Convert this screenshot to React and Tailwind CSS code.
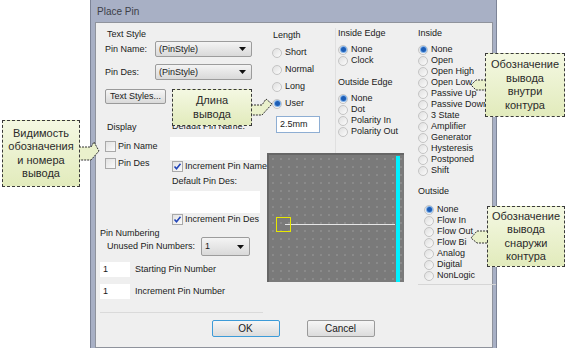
import clsx from "clsx";

const UI = "font-['Liberation_Sans',Arial,sans-serif]";

function Radio({ checked, label, className }) {
  return (
    <div className={clsx("flex items-center", className)}>
      <span className="flex h-[10px] w-[10px] shrink-0 items-center justify-center rounded-full border border-[#c4c4c4] bg-gradient-to-br from-[#e0e0e0] to-[#fbfbfb]">
        {checked && <span className="h-[5px] w-[5px] rounded-full bg-[#1c5db6] ring-1 ring-[#7fb0e8]" />}
      </span>
      <span className="ml-[3px] whitespace-nowrap">{label}</span>
    </div>
  );
}

function Check({ checked, label, className }) {
  return (
    <div className={clsx("flex items-center", className)}>
      <span className="flex h-[11px] w-[11px] shrink-0 items-center justify-center border border-[#a9a9a9] bg-gradient-to-br from-[#e2e2e2] to-[#fafafa]">
        {checked && (
          <svg width="9" height="9" viewBox="0 0 9 9">
            <path d="M1.5 4.5 L3.5 6.8 L7.5 1.8" fill="none" stroke="#2144b8" strokeWidth="1.6" />
          </svg>
        )}
      </span>
      <span className="ml-[2px] whitespace-nowrap">{label}</span>
    </div>
  );
}

function Select({ value, className }) {
  return (
    <div className={clsx("flex items-center justify-between rounded-[2px] border border-[#9c9c9c] bg-gradient-to-b from-[#f4f4f4] to-[#d9d9d9] pl-[3px] pr-[5px]", className)}>
      <span>{value}</span>
      <svg width="7" height="4" viewBox="0 0 7 4">
        <path d="M0 0 H7 L3.5 4 Z" fill="#111" />
      </svg>
    </div>
  );
}

function Field({ value, className }) {
  return (
    <div className={clsx("flex items-center bg-white pl-[3px]", className)}>{value}</div>
  );
}

function Callout({ lines, className }) {
  return (
    <div
      className={clsx(
        "absolute flex flex-col items-center justify-center border border-dashed border-[#3a3a3a] bg-gradient-to-b from-[#f4f8e2] to-[#e2ebbc] font-['Liberation_Sans',Arial,sans-serif] text-[11px] leading-[13.5px] text-[#2a2a2a]",
        className
      )}
    >
      {lines.map((l) => (
        <span key={l}>{l}</span>
      ))}
    </div>
  );
}

function Arrow({ points, className }) {
  return (
    <svg className={clsx("absolute left-0 top-0", className)} width="568" height="348" viewBox="0 0 568 348">
      <polygon points={points} fill="#eaf1cc" stroke="none" />
      <polyline points={points} fill="none" stroke="#333" strokeWidth="1" strokeDasharray="2 1" />
    </svg>
  );
}

function Preview() {
  return (
    <div className="relative h-[129px] w-[137px] border-l-2 border-t-2 border-[#666] bg-[#7a7a7a] bg-[radial-gradient(circle,#9c9c9c_0.5px,transparent_0.9px)] bg-[length:8px_8px]">
      <div className="absolute right-[4px] top-[1px] bottom-0 w-[4px] bg-[#00f0ff]" />
      <div className="absolute left-[16px] top-[69px] h-px w-[110px] bg-[#e6e6e6]" />
      <div className="absolute left-[7px] top-[62px] h-[15px] w-[15px] border border-[#e8e800]" />
    </div>
  );
}

export default function App() {
  const inside = ["None", "Open", "Open High", "Open Low", "Passive Up", "Passive Down", "3 State", "Amplifier", "Generator", "Hysteresis", "Postponed", "Shift"];
  const outside = ["None", "Flow In", "Flow Out", "Flow Bi", "Analog", "Digital", "NonLogic"];

  return (
    <div className={clsx("relative h-[348px] w-[568px] overflow-hidden bg-white text-[9px] leading-[11px] text-[#1a1a1a]", UI)}>
      <div className="ml-[90px] flex h-[348px] w-[407px] flex-col border-l border-r border-[#7d8497] bg-[#a8b0c5] pl-[4px] pr-[3px]">
        <div className="flex h-[22px] shrink-0 items-center pl-[2px] text-[10px] text-[#3c3f48]">Place Pin</div>

        <div className="flex flex-1 flex-col border border-[#8f939c] bg-[#efefef] pl-[4px] pt-[5px]">
          <div className="flex h-[286px]">
            {/* left column */}
            <div className="flex w-[167px] flex-col">
              <div className="mt-[1px] h-[11px] pl-[7px]">Text Style</div>
              <div className="mt-[1px] flex h-[16px] items-center">
                <span className="w-[55px] pl-[5px]">Pin Name:</span>
                <Select value="(PinStyle)" className="h-[16px] w-[97px]" />
              </div>
              <div className="mt-[7px] flex h-[16px] items-center">
                <span className="w-[55px] pl-[5px]">Pin Des:</span>
                <Select value="(PinStyle)" className="h-[16px] w-[97px]" />
              </div>
              <div className="ml-[5px] mt-[9px] flex h-[15px] w-[61px] items-center justify-center rounded-[2px] border border-[#9a9a9a] bg-gradient-to-b from-[#f6f6f6] to-[#dadada]">
                Text Styles...
              </div>

              <div className="flex">
                <div className="flex w-[70px] flex-col">
                  <div className="mt-[18px] h-[11px] pl-[7px]">Display</div>
                  <Check label="Pin Name" className="mt-[5px] h-[17px] pl-[5px]" />
                  <Check label="Pin Des" className="h-[17px] pl-[5px]" />
                </div>
                <div className="flex w-[92px] flex-col">
                  <div className="mt-[17px] h-[11px] pl-[2px]">Default Pin Name:</div>
                  <Field value="" className="mt-[5px] h-[23px] w-[90px]" />
                  <Check checked label="Increment Pin Name" className="h-[13px] pl-[2px]" />
                  <div className="mt-[3px] h-[11px] pl-[2px]">Default Pin Des:</div>
                  <Field value="" className="mt-[4px] h-[22px] w-[90px]" />
                  <Check checked label="Increment Pin Des" className="h-[13px] pl-[2px]" />
                </div>
              </div>

              <div className="mt-[2px] h-[11px]">Pin Numbering</div>
              <div className="-mt-[2px] flex h-[19px] items-center">
                <span className="w-[101px] pl-[7px]">Unused Pin Numbers:</span>
                <Select value="1" className="h-[19px] w-[49px]" />
              </div>
              <div className="mt-[6px] flex h-[15px] items-center">
                <Field value="1" className="h-[15px] w-[30px]" />
                <span className="ml-[5px]">Starting Pin Number</span>
              </div>
              <div className="mt-[7px] flex h-[15px] items-center">
                <Field value="1" className="h-[15px] w-[30px]" />
                <span className="ml-[5px]">Increment Pin Number</span>
              </div>
              <div className="mt-[13px] h-px w-[163px] bg-[#dadada]" />
            </div>

            {/* middle column */}
            <div className="flex w-[140px] flex-col">
              <div className="flex h-[125px]">
                <div className="flex w-[68px] flex-col">
                  <div className="mt-[2px] h-[11px] pl-[6px]">Length</div>
                  <div className="mt-[3px] flex flex-col pl-[5px]">
                    <Radio label="Short" className="h-[17px]" />
                    <Radio label="Normal" className="h-[17px]" />
                    <Radio label="Long" className="h-[17px]" />
                    <Radio checked label="User" className="h-[17px]" />
                  </div>
                  <Field value="2.5mm" className="ml-[9px] mt-[4px] h-[17px] w-[44px] border border-[#8eaed3]" />
                </div>
                <div className="flex w-[72px] flex-col border-l border-[#e0e0e0] pl-[2px]">
                  <div className="h-[11px]">Inside Edge</div>
                  <div className="mt-[5px] flex flex-col">
                    <Radio checked label="None" className="h-[11px]" />
                    <Radio label="Clock" className="h-[11px]" />
                  </div>
                  <div className="mt-[11px] h-[11px]">Outside Edge</div>
                  <div className="mt-[5px] flex flex-col">
                    <Radio checked label="None" className="h-[11px]" />
                    <Radio label="Dot" className="h-[11px]" />
                    <Radio label="Polarity In" className="h-[11px]" />
                    <Radio label="Polarity Out" className="h-[11px]" />
                  </div>
                </div>
              </div>
              <Preview />
            </div>

            {/* right column */}
            <div className="ml-[6px] flex w-[78px] flex-col pl-[5px]">
              <div className="h-[11px]">Inside</div>
              <div className="mt-[5px] flex flex-col">
                {inside.map((l, i) => (
                  <Radio key={l} checked={i === 0} label={l} className="h-[11px]" />
                ))}
              </div>
              <div className="mt-[10px] h-[11px]">Outside</div>
              <div className="mt-[7px] flex flex-col pl-[6px]">
                {outside.map((l, i) => (
                  <Radio key={l} checked={i === 0} label={l} className="h-[11px]" />
                ))}
              </div>
              <div className="mt-[3px] h-px w-[78px] bg-[#d6d6d6]" />
            </div>
          </div>

          <div className="mt-[6px] flex justify-center gap-[27px] pr-[6px]">
            <div className="flex h-[17px] w-[68px] items-center justify-center rounded-[2px] border border-[#3c9bd8] bg-gradient-to-b from-[#f6f6f6] to-[#dcdcdc] text-[10px]">
              OK
            </div>
            <div className="flex h-[17px] w-[68px] items-center justify-center rounded-[2px] border border-[#9a9a9a] bg-gradient-to-b from-[#f6f6f6] to-[#dcdcdc] text-[10px]">
              Cancel
            </div>
          </div>
        </div>
      </div>

      {/* callouts */}
      <Arrow points="251,105 262,105 266,99 272,104 262,115 251,115" />
      <Callout lines={["Длина", "вывода"]} className="left-[172px] top-[89px] h-[37px] w-[80px]" />

      <Arrow points="79,147 91,147 94,142 99,151 91,160 79,160" />
      <Callout lines={["Видимость", "обозначения", "и номера", "вывода"]} className="left-[2px] top-[120px] h-[67px] w-[78px]" />

      <Arrow points="486,80 476,80 471,85 476,90 486,90" />
      <Callout lines={["Обозначение", "вывода", "внутри", "контура"]} className="left-[485px] top-[53px] h-[64px] w-[80px]" />

      <Arrow points="488,231 477,231 471,238 477,243 488,243" />
      <Callout lines={["Обозначение", "вывода", "снаружи", "контура"]} className="left-[487px] top-[206px] h-[61px] w-[78px]" />
    </div>
  );
}
